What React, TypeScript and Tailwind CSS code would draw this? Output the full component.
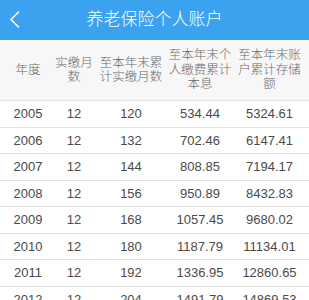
import React from 'react';

const rows: [string, string, string, string, string][] = [
  ['2005', '12', '120', '534.44', '5324.61'],
  ['2006', '12', '132', '702.46', '6147.41'],
  ['2007', '12', '144', '808.85', '7194.17'],
  ['2008', '12', '156', '950.89', '8432.83'],
  ['2009', '12', '168', '1057.45', '9680.02'],
  ['2010', '12', '180', '1187.79', '11134.01'],
  ['2011', '12', '192', '1336.95', '12860.65'],
  ['2012', '12', '204', '1491.79', '14869.53'],
];

const headers: string[][] = [
  ['年度'],
  ['实缴月', '数'],
  ['至本年末累', '计实缴月数'],
  ['至本年末个', '人缴费累计', '本息'],
  ['至本年末账', '户累计存储', '额'],
];

const cols = 'grid grid-cols-[56px_36px_78px_60px_79px]';

export default function App() {
  return (
    <div
      className="w-[309px] h-[300px] overflow-hidden bg-white"
      style={{ fontFamily: '"Liberation Sans", "Noto Sans CJK SC", sans-serif' }}
    >
      <div className="relative h-[40px] bg-[#3ba2ef] flex items-center justify-center">
        <svg className="absolute left-[9px] top-[11px]" width="11" height="17" viewBox="0 0 11 17" fill="none">
          <path d="M9.5 1 L2 8.5 L9.5 16" stroke="#ffffff" strokeWidth="1.6" strokeLinecap="round" strokeLinejoin="round" />
        </svg>
        <span className="text-[17px] text-white font-light">养老保险个人账户</span>
      </div>

      <div className={`${cols} h-[61px] bg-[#f7f7f7] border-b border-[#e2e2e2] text-[#6a6a6a] text-[12.5px] leading-[14.5px] font-light`}>
        {headers.map((h, i) => (
          <div key={i} className="flex flex-col items-center justify-center whitespace-nowrap">
            {h.map((line) => (
              <span key={line}>{line}</span>
            ))}
          </div>
        ))}
      </div>

      {rows.map((r) => (
        <div key={r[0]} className={`${cols} h-[26.5px] border-b border-[#e4e4e4] text-[13px] text-[#4a4a4a]`}>
          {r.map((v, i) => (
            <div key={i} className="flex items-center justify-center whitespace-nowrap">
              {v}
            </div>
          ))}
        </div>
      ))}
    </div>
  );
}
